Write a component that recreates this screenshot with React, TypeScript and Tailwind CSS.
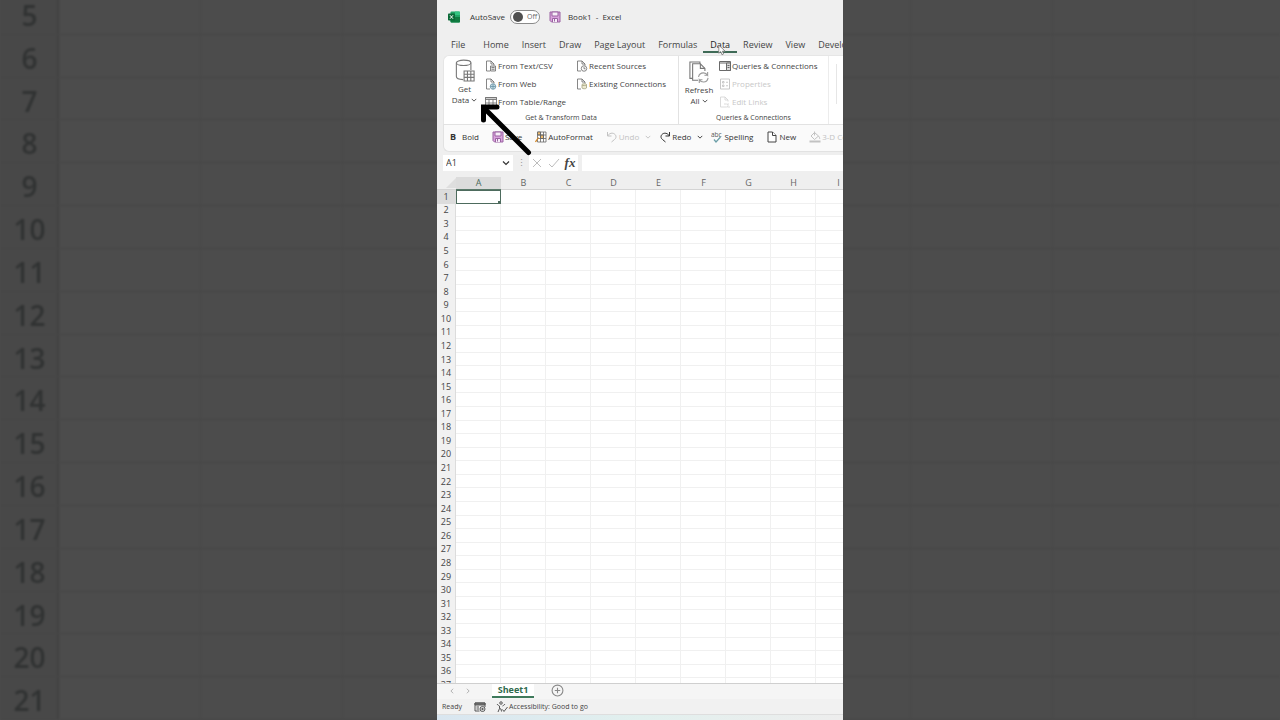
import type { ReactNode } from "react";

const TABS = ["File", "Home", "Insert", "Draw", "Page Layout", "Formulas", "Data", "Review", "View", "Developer"];
const COLUMNS = ["A", "B", "C", "D", "E", "F", "G", "H", "I"];
const ROWS = Array.from({ length: 37 }, (_, i) => i + 1);
const BACKDROP_ROWS = Array.from({ length: 17 }, (_, i) => i + 5);
const BACKDROP_COLUMNS = Array.from({ length: 9 }, (_, i) => i);

const Backdrop = () => (
  <div aria-hidden="true" className="absolute inset-0 overflow-hidden">
    <div className="-mt-2 flex h-[calc(100%+8px)] flex-col blur-[1px]">
      {BACKDROP_ROWS.map((row) => (
        <div key={row} className="flex flex-1 border-b border-[#464646]">
          <div className="flex w-[59px] shrink-0 items-center justify-center border-r-2 border-[#424242] bg-[#484848] pt-1 pl-0.5 text-[28px] leading-6 font-semibold text-[#303232]">
            {row}
          </div>
          {BACKDROP_COLUMNS.map((column) => (
            <div key={column} className="w-[142px] shrink-0 border-r border-[#474747]" />
          ))}
        </div>
      ))}
    </div>
  </div>
);

const Chevron = ({ className = "size-[6px]" }: { className?: string }) => (
  <svg viewBox="0 0 8 8" className={`shrink-0 ${className}`} fill="none" stroke="currentColor" strokeWidth="1.2">
    <path d="M1 2.5 4 5.5 7 2.5" />
  </svg>
);

const ExcelLogo = () => (
  <svg viewBox="0 0 24 24" className="size-3 shrink-0">
    <rect x="5" y="1" width="19" height="22" rx="2" fill="#21a366" />
    <path d="M14 1h8a2 2 0 0 1 2 2v5H14z" fill="#33c481" />
    <path d="M5 12h19v9a2 2 0 0 1-2 2H7a2 2 0 0 1-2-2z" fill="#107c41" />
    <path d="M5 12h9v6H5z" fill="#185c37" />
    <rect x="0" y="5" width="14" height="14" rx="1.5" fill="#0b6a38" />
    <path d="M4 8.5 10 15.5M10 8.5 4 15.5" stroke="#fff" strokeWidth="2" />
  </svg>
);

const SaveIcon = () => (
  <svg viewBox="0 0 24 24" className="size-3 shrink-0" fill="#d9a3dc" stroke="#9a62a2" strokeWidth="2">
    <path d="M2 2h20v20H5l-3-3z" />
    <path d="M6 2h12v8H6z" fill="#f7eef8" />
    <path d="M7 22v-7h10v7" fill="#f7eef8" />
    <path d="M11 16v5" />
  </svg>
);

const DatabaseIcon = () => (
  <svg viewBox="0 0 22 26" className="h-6 w-5 shrink-0" fill="none" stroke="#777" strokeWidth="1.2">
    <path d="M1.5 4v15c0 2 3 3.3 7.5 3.5M17.500 4v8" />
    <ellipse cx="9.500" cy="4" rx="8" ry="3" />
    <path d="M10 13h11v11H10z" fill="#fff" />
    <path d="M10 16.500h11M10 20h11M13.700 13v11M17.400 13v11" />
  </svg>
);

const RefreshIcon = () => (
  <svg viewBox="0 0 22 26" className="h-6 w-5 shrink-0" fill="none" stroke="#777" strokeWidth="1.2">
    <path d="M4 20H1V2h11v2" />
    <path d="M10 22H4V4h8.500l5 5v3" />
    <path d="M12.500 4v5h5" />
    <path
      d="M10.500 18.500c.5-3 3-4.500 5.500-4.500 2 0 3.500 1 4.500 2.500V13M20.500 16.500H17M21 19.500c-.5 3-2.700 4.500-5 4.500-2.200 0-3.700-1-4.700-2.500V25M11.300 21.500h3.500"
      stroke="#999"
    />
  </svg>
);

const PageIcon = ({ children }: { children?: ReactNode }) => (
  <svg viewBox="0 0 24 24" className="size-3 shrink-0 opacity-80" fill="none" stroke="currentColor" strokeWidth="1.6">
    <path d="M10 22H3V2h9l6 6v3" />
    <path d="M12 2v6h6" />
    {children}
  </svg>
);

const TextFileIcon = () => (
  <PageIcon>
    <path d="M11 12h10v10H11z" fill="#e4e4e4" />
    <path d="M13 15h6M13 18.500h6" />
  </PageIcon>
);

const WebIcon = () => (
  <PageIcon>
    <circle cx="16" cy="17" r="5.500" fill="#b9d3de" stroke="#41788f" />
    <path d="M10.500 17h11M16 11.500v11" stroke="#41788f" />
  </PageIcon>
);

const RecentIcon = () => (
  <PageIcon>
    <circle cx="16" cy="17" r="5.500" fill="#fff" />
    <path d="M16 14v3.500h3" />
  </PageIcon>
);

const ConnectionIcon = () => (
  <PageIcon>
    <path d="M12 13c0-2 9-2 9 0v7c0 2-9 2-9 0z" fill="#e9e6c8" stroke="#8c8a5e" />
    <path d="M12 14c1 1.500 8 1.500 9 0" stroke="#8c8a5e" />
  </PageIcon>
);

const LinkIcon = () => (
  <PageIcon>
    <path d="M10 16h5a3 3 0 0 1 0 6h-5M20 16h-3M22 22h-5" />
  </PageIcon>
);

const TableIcon = () => (
  <svg viewBox="0 0 24 24" className="size-3 shrink-0 opacity-80" fill="none" stroke="currentColor" strokeWidth="1.600">
    <path d="M1 3h22v18H1z" />
    <path d="M1 3h22v4H1z" fill="#c4c4c4" />
    <path d="M1 14h22M8 7v14M16 7v14" />
  </svg>
);

const PaneIcon = () => (
  <svg viewBox="0 0 24 24" className="size-3 shrink-0 opacity-80" fill="none" stroke="currentColor" strokeWidth="2">
    <path d="M1 3h22v18H1zM1 6h22" />
    <path d="M15 6h8v15h-8z" fill="#d0d0d0" />
    <path d="M17 11h4M17 15h4" />
  </svg>
);

const PropertiesIcon = () => (
  <svg viewBox="0 0 24 24" className="size-3 shrink-0" fill="none" stroke="currentColor" strokeWidth="2">
    <path d="M3 2h18v20H3z" />
    <path d="M7 7h3v3H7zM7 14h3v3H7zM14 8.500h4M14 15.500h4" />
  </svg>
);

const AutoFormatIcon = () => (
  <svg viewBox="0 0 24 24" className="size-3 shrink-0" fill="none" stroke="#666" strokeWidth="1.600">
    <path d="M5 2h17v20H5z" fill="#fff" />
    <path d="M5 2h6v6H5zM11 8h6v7h-6z" fill="#f0bd70" />
    <path d="M5 8h17M5 15h17M11 2v20M17 2v20" />
    <path d="M1 22 7 13" stroke="#d48828" strokeWidth="2.500" />
  </svg>
);

const UndoIcon = ({ className = "" }: { className?: string }) => (
  <svg viewBox="0 0 24 24" className={`size-3 shrink-0 ${className}`} fill="none" stroke="currentColor" strokeWidth="2">
    <path d="M3 2v8h8" />
    <path d="M3 10c4-6 10-7 14-4s4 8 0 11l-6 5" />
  </svg>
);

const SpellingIcon = () => (
  <svg viewBox="0 0 24 24" className="size-3 shrink-0">
    <text x="0" y="12" fontSize="13" fill="#555">abc</text>
    <path d="m6 17 4 5 9-10" fill="none" stroke="#6c9fa8" strokeWidth="2.500" />
  </svg>
);

const NewIcon = () => (
  <svg viewBox="0 0 24 24" className="size-3 shrink-0" fill="#fff" stroke="#444" strokeWidth="2">
    <path d="M4 2h9l7 7v13H4z" />
    <path d="M13 2v7h7" />
  </svg>
);

const BucketIcon = () => (
  <svg viewBox="0 0 24 24" className="size-3 shrink-0" fill="none" stroke="currentColor" strokeWidth="2">
    <path d="m11 3 8 7-8 7-7-7zM11 1v8M19 10c2 3 3 4 2 6" />
    <path d="M1 21h22" strokeWidth="4" />
  </svg>
);

interface CommandProps {
  icon: ReactNode;
  label: string;
  disabled?: boolean;
}

const RibbonButton = ({ icon, label, disabled = false }: CommandProps) => (
  <button
    type="button"
    disabled={disabled}
    className={`flex h-[18px] items-center gap-px whitespace-nowrap ${disabled ? "text-[#c8c8c8]" : "text-[#444]"}`}
  >
    {icon}
    <span>{label}</span>
  </button>
);

const QuickButton = ({ icon, label, disabled = false }: CommandProps) => (
  <button
    type="button"
    disabled={disabled}
    className={`flex shrink-0 items-center gap-px whitespace-nowrap ${disabled ? "text-[#c2c2c2]" : "text-[#333]"}`}
  >
    {icon}
    <span>{label}</span>
  </button>
);

const TitleBar = () => (
  <header className="flex h-[34px] shrink-0 items-center pl-[11px] whitespace-nowrap">
    <ExcelLogo />
    <label className="ml-[10px] flex items-center gap-[5px]">
      <span>AutoSave</span>
      <input type="checkbox" className="peer sr-only" />
      <span className="flex h-[14px] w-[30px] items-center gap-1 rounded-full border border-[#8a8a8a] bg-white pl-[2px] text-[7px] text-[#666]">
        <span className="size-[10px] rounded-full bg-[#505050]" />
        Off
      </span>
    </label>
    <span className="mr-[7px] ml-[9px] flex">
      <SaveIcon />
    </span>
    <span className="whitespace-pre">Book1  -  Excel</span>
  </header>
);

const TabBar = () => (
  <nav className="flex h-[21px] shrink-0 gap-[13px] pl-[14px] text-[9px]">
    {TABS.map((tab) => (
      <button
        key={tab}
        type="button"
        className={`relative h-[19px] shrink-0 pt-0.5 whitespace-nowrap first:mr-[5px] ${tab === "Data" ? "-mx-[7px] border-b-2 border-[#3f6b57] px-[7px] pt-1 font-medium text-[#222]" : "text-[#444]"}`}
      >
        {tab}
        {tab === "Data" && (
          <svg viewBox="0 0 10 14" className="absolute top-2.5 left-[15px] h-3 w-2" fill="#fff" stroke="#777" strokeWidth="1">
            <path d="M1 1v10l2.500-2 1.500 4 2-1-1.500-3.500H9z" />
          </svg>
        )}
      </button>
    ))}
  </nav>
);

const Ribbon = () => (
  <section className="ml-[6px] flex h-[69px] shrink-0 rounded-tl-md border-t border-l border-[#e6e6e6] bg-white">
    <div className="flex w-[235px] shrink-0 flex-col border-r border-[#e2e2e2]">
      <div className="flex h-[56px]">
        <button type="button" className="flex w-[41px] flex-col items-center pt-[3px] leading-[11px] text-[#444]">
          <DatabaseIcon />
          <span>Get</span>
          <span className="flex items-center gap-0.5">
            Data <Chevron />
          </span>
        </button>
        <div className="flex w-[91px] shrink-0 flex-col pt-px">
          <RibbonButton icon={<TextFileIcon />} label="From Text/CSV" />
          <RibbonButton icon={<WebIcon />} label="From Web" />
          <RibbonButton icon={<TableIcon />} label="From Table/Range" />
        </div>
        <div className="flex flex-col pt-px">
          <RibbonButton icon={<RecentIcon />} label="Recent Sources" />
          <RibbonButton icon={<ConnectionIcon />} label="Existing Connections" />
        </div>
      </div>
      <div className="text-center text-[7px] leading-3 text-[#444]">Get &amp; Transform Data</div>
    </div>
    <div className="flex w-[150px] shrink-0 flex-col border-r border-[#ececec]">
      <div className="flex h-[56px]">
        <button type="button" className="flex w-[40px] flex-col items-center pt-1 leading-[11px] text-[#444]">
          <RefreshIcon />
          <span>Refresh</span>
          <span className="flex items-center gap-0.5">
            All <Chevron />
          </span>
        </button>
        <div className="flex flex-col pt-px">
          <RibbonButton icon={<PaneIcon />} label="Queries & Connections" />
          <RibbonButton icon={<PropertiesIcon />} label="Properties" disabled />
          <RibbonButton icon={<LinkIcon />} label="Edit Links" disabled />
        </div>
      </div>
      <div className="text-center text-[7px] leading-3 text-[#444]">Queries &amp; Connections</div>
    </div>
    <div className="my-2 ml-[7px] h-10 border-l border-[#e6e6e6]" />
  </section>
);

const QuickAccess = () => (
  <div className="ml-[6px] flex h-[28px] shrink-0 items-center rounded-bl-md border-y border-l border-[#e2e2e2] bg-[#fafafa] pb-0.5 pl-[6px]">
    <div className="flex gap-[13px]">
      <QuickButton icon={<b className="w-[11px] text-left text-[9px] font-bold">B</b>} label="Bold" />
      <QuickButton icon={<SaveIcon />} label="Save" />
      <QuickButton icon={<AutoFormatIcon />} label="AutoFormat" />
      <div className="flex items-center gap-1.5 text-[#c2c2c2]">
        <QuickButton icon={<UndoIcon />} label="Undo" disabled />
        <Chevron />
      </div>
    </div>
    <div className="ml-2 flex items-center gap-1.5">
      <QuickButton icon={<UndoIcon className="-scale-x-100" />} label="Redo" />
      <Chevron />
    </div>
    <div className="ml-2 flex gap-[13px]">
      <QuickButton icon={<SpellingIcon />} label="Spelling" />
      <QuickButton icon={<NewIcon />} label="New" />
      <QuickButton icon={<BucketIcon />} label="3-D Color" disabled />
    </div>
  </div>
);

const FormulaBar = () => (
  <div className="flex h-[25px] shrink-0 items-start pt-[3px] pl-[6px]">
    <div className="flex h-4 w-[70px] shrink-0 items-center bg-white px-[3px]">
      <input aria-label="Name Box" defaultValue="A1" className="min-w-0 flex-1 bg-transparent text-[9px] outline-none" />
      <Chevron className="size-[8px]" />
    </div>
    <span className="w-4 text-center text-[9px] leading-4 text-[#999]">⋮</span>
    <div className="flex h-4 w-[49px] shrink-0 items-center justify-between bg-white px-[2px]">
      <button type="button" aria-label="Cancel" className="text-[#bdbdbd]">
        <svg viewBox="0 0 12 12" className="size-3" fill="none" stroke="currentColor">
          <path d="m2 2 8 8M10 2l-8 8" />
        </svg>
      </button>
      <button type="button" aria-label="Enter" className="text-[#bdbdbd]">
        <svg viewBox="0 0 12 12" className="size-3" fill="none" stroke="currentColor">
          <path d="m1 7 3 3 7-8" />
        </svg>
      </button>
      <button type="button" className="w-3 font-['Liberation_Serif',serif] text-[13px] leading-3 font-bold text-[#444] italic">
        fx
      </button>
    </div>
    <input aria-label="Formula Bar" className="ml-1 h-4 min-w-0 flex-1 bg-white px-1 outline-none" />
  </div>
);

const Sheet = () => (
  <div className="min-h-0 flex-1 overflow-hidden bg-white">
    <table className="h-[515px] w-[424px] table-fixed border-separate border-spacing-0 text-center text-[9px] leading-3">
      <thead>
        <tr className="bg-[#efefef] text-[#666]">
          <th className="w-[19px] border-b border-[#d4d4d4] p-0">
            <svg viewBox="0 0 10 10" className="ml-auto size-[10px]" fill="#dedede">
              <path d="M10 0v10H0z" />
            </svg>
          </th>
          {COLUMNS.map((column) => (
            <th
              key={column}
              className={`border-b p-0 font-normal ${column === "A" ? "border-[#5b7a6b] bg-[#dcdcdc] text-[#4b6a5b]" : "border-[#d4d4d4]"}`}
            >
              {column}
            </th>
          ))}
        </tr>
      </thead>
      <tbody>
        {ROWS.map((row) => (
          <tr key={row}>
            <th
              className={`border-r border-[#dcdcdc] p-0 font-normal text-[#444] ${row === 1 ? "bg-[#dcdcdc]" : "bg-[#f1f1f1]"}`}
            >
              {row}
            </th>
            {COLUMNS.map((column) =>
              row === 1 && column === "A" ? (
                <td key={column} className="relative p-0 outline -outline-offset-1 outline-[#4d6b5d]">
                  <span className="absolute right-0 bottom-0 size-[3px] bg-[#4d6b5d]" />
                </td>
              ) : (
                <td key={column} className="border-r border-b border-[#f0f0f0] p-0" />
              ),
            )}
          </tr>
        ))}
      </tbody>
    </table>
  </div>
);

const SheetTabs = () => (
  <div className="flex h-[16px] shrink-0 items-start border-t border-[#cfcfcf] bg-[#f5f5f5] pl-3">
    <button type="button" aria-label="Previous sheet" className="w-4 pt-1 text-[#aaa]">
      <Chevron className="size-[6px] rotate-90" />
    </button>
    <button type="button" aria-label="Next sheet" className="pt-1 text-[#aaa]">
      <Chevron className="size-[6px] -rotate-90" />
    </button>
    <button
      type="button"
      className="ml-[21px] h-[14px] w-[42px] border-b-2 border-[#3f7a5c] bg-white text-[9px] leading-3 font-bold text-[#2f6a4d]"
    >
      Sheet1
    </button>
    <button type="button" aria-label="New sheet" className="ml-[17px] text-[#888]">
      <svg viewBox="0 0 12 12" className="size-[13px]" fill="none" stroke="currentColor">
        <circle cx="6" cy="6" r="5" />
        <path d="M6 3.500v5M3.500 6h5" />
      </svg>
    </button>
  </div>
);

const StatusBar = () => (
  <footer className="shrink-0">
    <div className="flex h-[15px] items-center bg-[#f1f1f1] pl-[5px] text-[7px] text-[#444]">
      <span className="w-8">Ready</span>
      <svg viewBox="0 0 24 24" className="mr-[10px] size-3" fill="none" stroke="#555" strokeWidth="2">
        <path d="M11 20H2V4h20v8" />
        <path d="M2 4h20v4H2z" fill="#777" />
        <path d="M5 12h5M5 16h5" />
        <circle cx="17" cy="16" r="5" />
        <circle cx="17" cy="16" r="1.500" fill="#555" />
      </svg>
      <svg viewBox="0 0 24 24" className="mr-px size-3" fill="none" stroke="#555" strokeWidth="2">
        <circle cx="10" cy="4" r="2.500" />
        <path d="M2 6c2 3 4 3 5 4v5l-3 7M18 6c-2 3-4 3-5 4M7 15l3 1 1 5M13 17l3 4 7-9" />
      </svg>
      <span>Accessibility: Good to go</span>
    </div>
    <div className="h-[6px] border-t border-[#dedede] bg-linear-to-r from-[#d9e6f0] via-[#e2f0ee] to-[#ededed]" />
  </footer>
);

const PointerArrow = () => (
  <svg
    aria-hidden="true"
    viewBox="0 0 56 56"
    className="absolute top-[101px] left-[41px] size-14"
    fill="none"
    stroke="#000"
    strokeWidth="5"
    strokeLinecap="round"
  >
    <path d="M50.500 51.500 6 7" />
    <path d="M19 6H5.500v13" strokeLinejoin="miter" />
  </svg>
);

export default function App() {
  return (
    <div className="relative flex h-screen justify-center overflow-hidden bg-[#4c4c4c] font-['Open_Sans','Noto_Sans',sans-serif]">
      <Backdrop />
      <main className="relative flex aspect-[203/360] h-full flex-col overflow-hidden bg-[#efefef] text-[8px] leading-3 text-[#333]">
        <TitleBar />
        <TabBar />
        <Ribbon />
        <QuickAccess />
        <FormulaBar />
        <Sheet />
        <SheetTabs />
        <StatusBar />
        <PointerArrow />
      </main>
    </div>
  );
}
